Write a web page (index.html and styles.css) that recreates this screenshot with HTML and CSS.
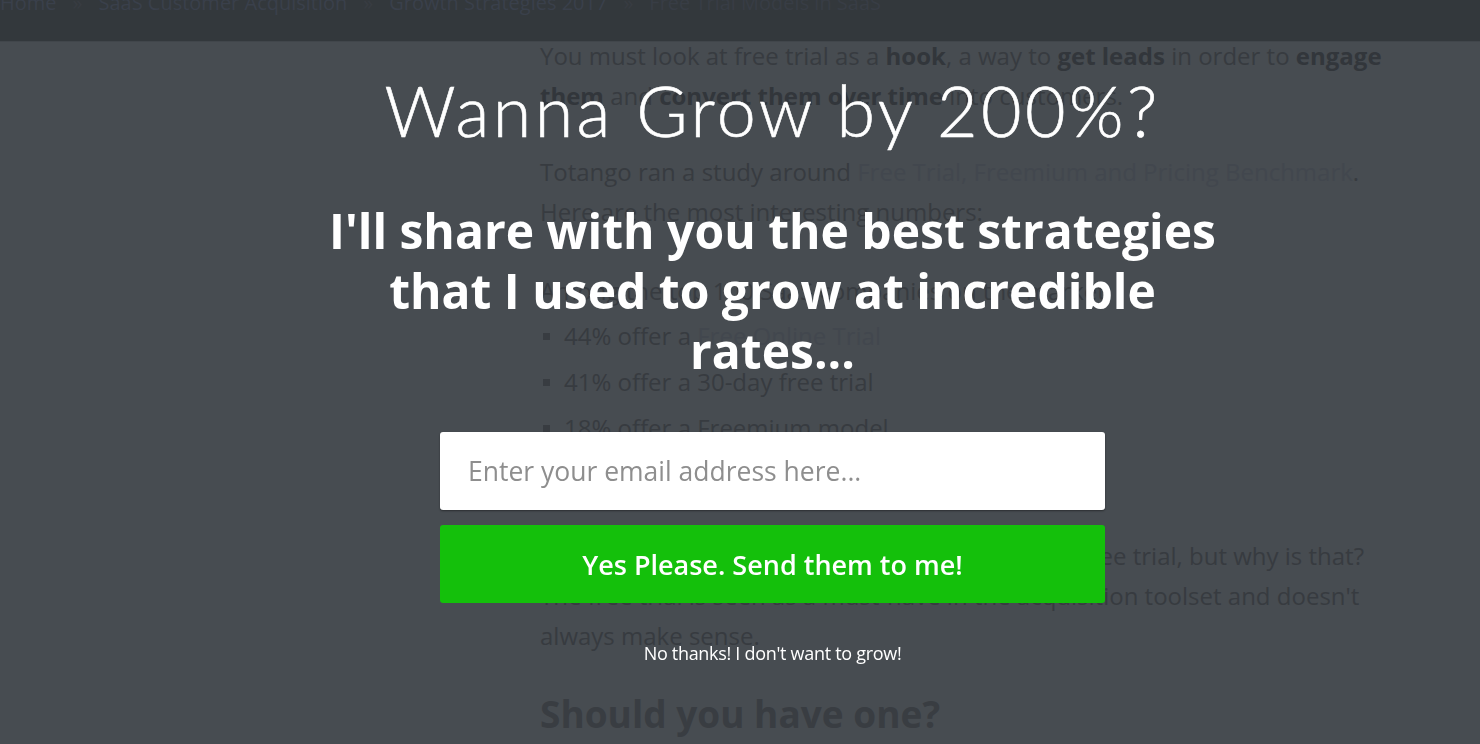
FILE: index.html
```html
<!DOCTYPE html>
<html lang="en">
<head>
<meta charset="utf-8">
<title>Wanna Grow by 200%?</title>
<link rel="stylesheet" href="styles.css">
</head>
<body>
<header class="topbar">
  <nav class="crumbs">
    <a class="crumb">Home</a><span class="sep">»</span>
    <a class="crumb">SaaS Customer Acquisition</a><span class="sep">»</span>
    <a class="crumb">Growth Strategies 2017</a><span class="sep">»</span>
    <span class="crumb current">Free Trial Models in SaaS</span>
  </nav>
</header>

<div class="page">
  <aside class="sidebar"></aside>
  <article class="article">
    <p>You must look at free trial as a <b>hook</b>, a way to <b>get leads</b> in order to <b>engage</b><br><b>them</b> and <b>convert them over time</b> into customers.</p>
    <p>Totango ran a study around <a class="link">Free Trial, Freemium and Pricing Benchmark</a>.<br>Here are the most interesting numbers:</p>
    <p class="intro">Among the top 100 SaaS companies on the market:</p>
    <ul class="list">
      <li>44% offer a <a class="link">Free Online Trial</a></li>
      <li>41% offer a 30-day free trial</li>
      <li>18% offer a Freemium model</li>
      <li>15% have no free option</li>
    </ul>
    <p>Most of the companies in the SaaS space offer a free trial, but why is that?<br>The free trial is seen as a must-have in the acquisition toolset and doesn't<br>always make sense.</p>
    <h2 class="subtitle">Should you have one?</h2>
  </article>
</div>

<div class="overlay">
  <section class="popup">
    <h1 class="popup-title">Wanna Grow by 200%?</h1>
    <p class="popup-sub">I'll share with you the best strategies<br>that I used to grow at incredible<br>rates...</p>
    <form class="popup-form">
      <input class="email" type="email" placeholder="Enter your email address here...">
      <button class="cta" type="button">Yes Please. Send them to me!</button>
    </form>
    <a class="decline">No thanks! I don't want to grow!</a>
  </section>
</div>
</body>
</html>
```

FILE: styles.css
```css
* { box-sizing: border-box; }

html, body {
  margin: 0;
  padding: 0;
}

body {
  background: #474c51;
  font-family: "Open Sans", "Liberation Sans", sans-serif;
  color: #373b40;
  width: 1480px;
  height: 744px;
  overflow: hidden;
}

.topbar {
  position: fixed;
  top: 0;
  left: 0;
  right: 0;
  height: 42px;
  background: #33383c;
  border-bottom: 1px solid #41464b;
  overflow: hidden;
  z-index: 2;
}

.crumbs {
  display: flex;
  font-size: 20px;
  line-height: 20px;
  margin-top: -7px;
  white-space: nowrap;
}

.crumb { color: #3a404b; }
.crumb.current { color: #383d45; }
.sep { margin: 0 16px; color: #383c42; }

.page {
  display: flex;
  padding-top: 36px;
}

.sidebar {
  width: 540px;
  flex: none;
}

.article {
  width: 900px;
  font-size: 24px;
  line-height: 40px;
}

.article p {
  margin: 0 0 36px;
}

.article p.intro {
  margin: 0 0 2px;
  padding-top: 3px;
}

.article b {
  font-weight: 700;
  color: #32363b;
}

.link { color: #42474e; }

.list {
  list-style: none;
  margin: 0 0 39px;
  padding: 0;
}

.list li {
  position: relative;
  padding-left: 24px;
  line-height: 46px;
}

.list li::before {
  content: "";
  position: absolute;
  left: 3px;
  top: 20px;
  width: 7px;
  height: 7px;
  background: #383c41;
}

.subtitle {
  margin: 0;
  font-size: 37px;
  font-weight: 700;
  line-height: 44px;
  color: #393d42;
}

.overlay {
  position: fixed;
  inset: 0;
  display: flex;
  justify-content: center;
  padding-left: 65px;
  z-index: 3;
}

.popup {
  width: 960px;
  flex: none;
  padding-top: 72px;
  display: flex;
  flex-direction: column;
  align-items: center;
  text-align: center;
  color: #ffffff;
}

.popup-title {
  margin: 0;
  font-family: "Lato", "Open Sans", sans-serif;
  font-weight: 300;
  font-size: 70px;
  line-height: 76px;
  letter-spacing: 3.4px;
  -webkit-text-stroke: 0.6px #ffffff;
}

.popup-sub {
  margin: 53px 0 0;
  font-weight: 700;
  font-size: 48px;
  line-height: 60px;
}

.popup-form {
  margin-top: 51px;
  width: 665px;
  display: flex;
  flex-direction: column;
  gap: 15px;
}

.email {
  height: 78px;
  border: none;
  border-radius: 3px;
  background: #ffffff;
  padding: 0 28px;
  font-family: "Open Sans", sans-serif;
  font-size: 26.5px;
  color: #333;
  outline: none;
  box-shadow: 0 1px 2px rgba(0,0,0,0.4);
}

.email::placeholder { color: #8e8e8e; }

.cta {
  height: 78px;
  border: none;
  border-radius: 3px;
  background: #14c00b;
  color: #ffffff;
  font-family: "Open Sans", sans-serif;
  font-size: 27px;
  font-weight: 600;
}

.decline {
  margin-top: 40px;
  font-size: 18px;
  line-height: 20px;
  color: #ffffff;
  letter-spacing: -0.3px;
}
```
